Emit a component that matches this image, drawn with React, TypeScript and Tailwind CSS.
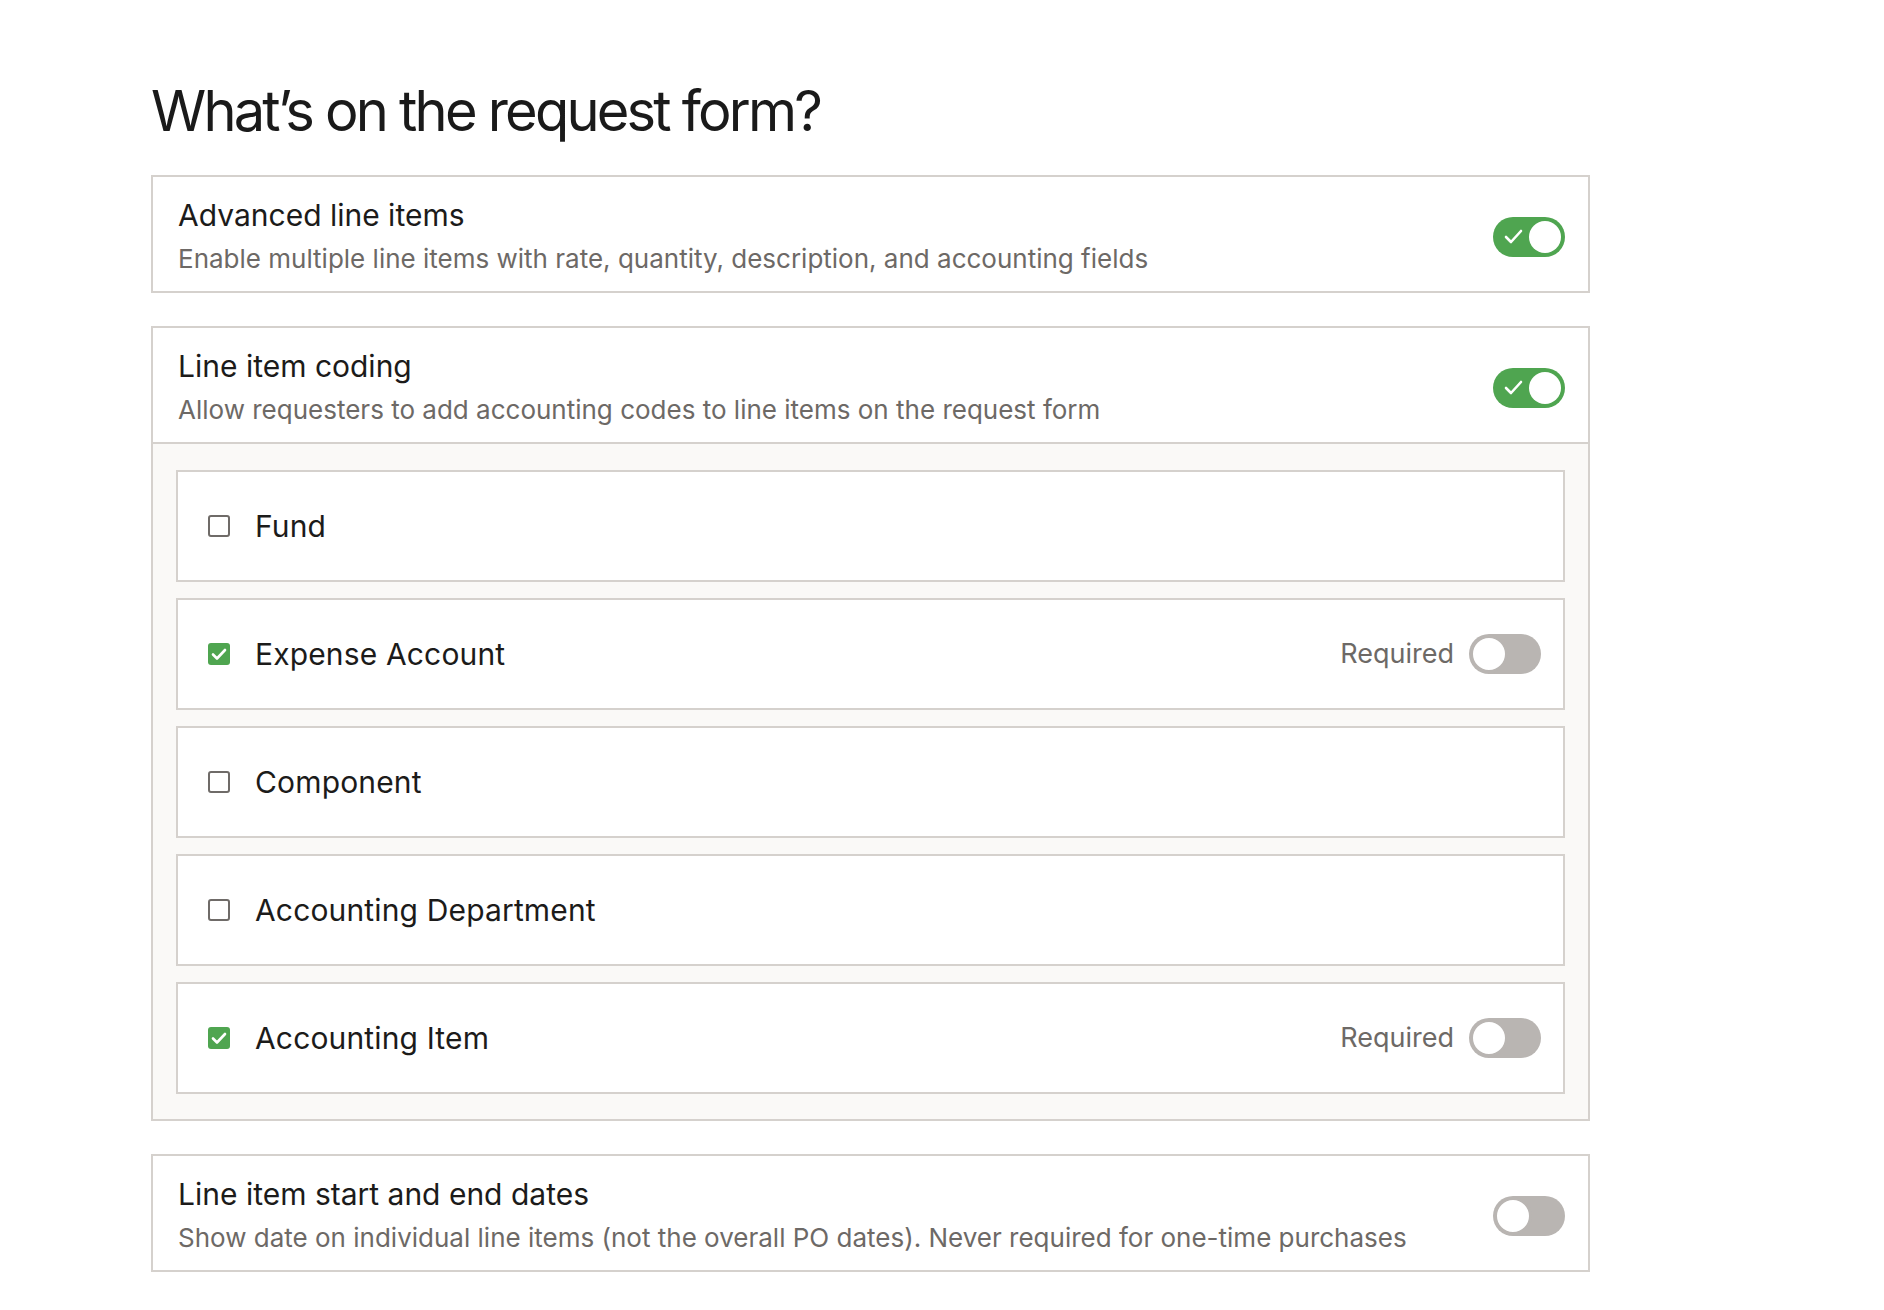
import React, { useState } from 'react';

const font = { fontFamily: 'Inter, "Noto Sans", sans-serif' };

function Toggle({ on, onChange }: { on: boolean; onChange: () => void }) {
  return (
    <button
      onClick={onChange}
      className={`relative w-[72px] h-[40px] rounded-full shrink-0 ${on ? 'bg-[#4fa550]' : 'bg-[#b9b5b2]'}`}
    >
      {on ? (
        <>
          <svg className="absolute left-[11px] top-[11px]" width="19" height="17" viewBox="0 0 19 17" fill="none">
            <path d="M2 9 L7 14 L17 3" stroke="white" strokeWidth="2.6" strokeLinecap="round" strokeLinejoin="round" />
          </svg>
          <span className="absolute right-[4px] top-[4px] w-[32px] h-[32px] rounded-full bg-white" />
        </>
      ) : (
        <span className="absolute left-[1px] top-[1px] w-[38px] h-[38px] rounded-full bg-white border-[3px] border-[#b9b5b2]" />
      )}
    </button>
  );
}

function Checkbox({ checked }: { checked: boolean }) {
  return checked ? (
    <span className="w-[22px] h-[22px] rounded-[3px] bg-[#4fa550] flex items-center justify-center shrink-0">
      <svg width="16" height="14" viewBox="0 0 16 14" fill="none">
        <path d="M2 7.5 L6 11.5 L14 3" stroke="white" strokeWidth="2.6" strokeLinecap="round" strokeLinejoin="round" />
      </svg>
    </span>
  ) : (
    <span className="w-[22px] h-[22px] rounded-[3px] border-2 border-[#6f6b68] bg-white shrink-0" />
  );
}

function SettingHeader({ title, desc, on, onChange }: { title: string; desc: string; on: boolean; onChange: () => void }) {
  return (
    <div className="flex items-center justify-between pl-[25px] pr-[23px] pt-[20px] pb-[14px]">
      <div>
        <div className="text-[30px] leading-[36px] text-[#1c1b1a]">{title}</div>
        <div className="mt-[8px] text-[26px] leading-[36px] text-[#6d6966]">{desc}</div>
      </div>
      <Toggle on={on} onChange={onChange} />
    </div>
  );
}

const codes = [
  { name: 'Fund', checked: false },
  { name: 'Expense Account', checked: true },
  { name: 'Component', checked: false },
  { name: 'Accounting Department', checked: false },
  { name: 'Accounting Item', checked: true },
];

export default function App() {
  const [advanced, setAdvanced] = useState(true);
  const [coding, setCoding] = useState(true);
  const [dates, setDates] = useState(false);
  const [required, setRequired] = useState<Record<string, boolean>>({});

  return (
    <div className="min-h-screen bg-white pl-[151px] pt-[83px] pb-[40px]" style={font}>
      <h1 className="text-[56px] leading-none text-[#1a1a1a] tracking-[-0.05em]">What’s on the request form?</h1>

      <div className="w-[1439px] mt-[36px] flex flex-col gap-[33px]">
        <div className="border-2 border-[#d5d1cd] bg-white">
          <SettingHeader
            title="Advanced line items"
            desc="Enable multiple line items with rate, quantity, description, and accounting fields"
            on={advanced}
            onChange={() => setAdvanced(!advanced)}
          />
        </div>

        <div className="border-2 border-[#d5d1cd] bg-white">
          <SettingHeader
            title="Line item coding"
            desc="Allow requesters to add accounting codes to line items on the request form"
            on={coding}
            onChange={() => setCoding(!coding)}
          />
          <div className="border-t-2 border-[#d5d1cd] bg-[#faf9f7] px-[23px] pt-[26px] pb-[25px] flex flex-col gap-[16px]">
            {codes.map((c) => (
              <div key={c.name} className="h-[112px] border-2 border-[#d5d1cd] bg-white flex items-center pl-[30px] pr-[22px]">
                <Checkbox checked={c.checked} />
                <span className="ml-[25px] text-[30px] text-[#1c1b1a] tracking-[0.005em]">{c.name}</span>
                {c.checked && (
                  <div className="ml-auto flex items-center gap-[15px]">
                    <span className="text-[27px] text-[#6d6966]">Required</span>
                    <Toggle
                      on={!!required[c.name]}
                      onChange={() => setRequired({ ...required, [c.name]: !required[c.name] })}
                    />
                  </div>
                )}
              </div>
            ))}
          </div>
        </div>

        <div className="border-2 border-[#d5d1cd] bg-white">
          <SettingHeader
            title="Line item start and end dates"
            desc="Show date on individual line items (not the overall PO dates). Never required for one-time purchases"
            on={dates}
            onChange={() => setDates(!dates)}
          />
        </div>
      </div>
    </div>
  );
}
